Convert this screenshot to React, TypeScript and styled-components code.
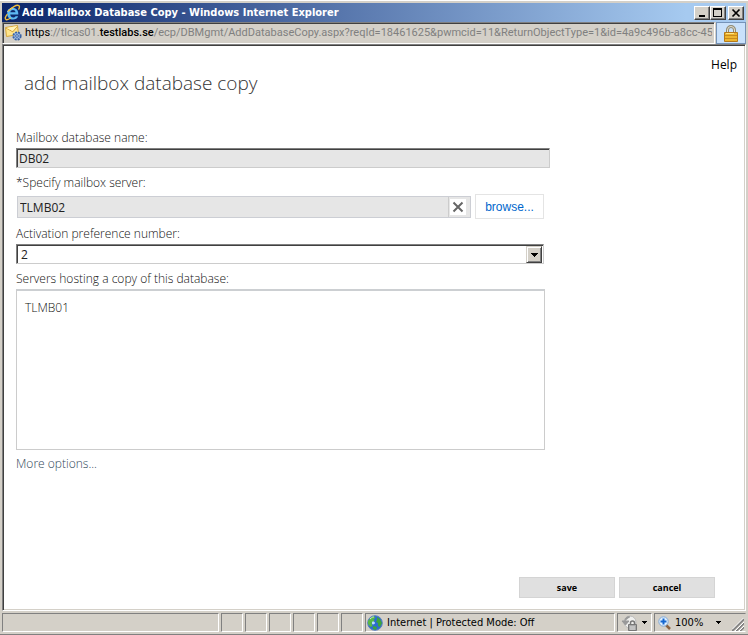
import React from "react";
import styled, { createGlobalStyle } from "styled-components";

const chromeFont = `"DejaVu Sans Condensed", "DejaVu Sans", Tahoma, sans-serif`;
const pageFont = `"Open Sans", "Noto Sans", "Segoe UI", sans-serif`;
const face = "#d4d0c8";

const GlobalStyle = createGlobalStyle`
  *, *::before, *::after { box-sizing: border-box; }
  body { margin: 0; background: ${face}; }
  button, input, select { font: inherit; color: inherit; margin: 0; border-radius: 0; }
  svg { display: block; flex: none; }
`;

const Window = styled.div`
  display: flex;
  flex-direction: column;
  min-height: 100vh;
  padding: 1px 2px 0;
  background: ${face};
  border-bottom: 1px solid #808080;
  box-shadow: inset 0 1px #fff;
  font-family: ${chromeFont};
  font-size: 11px;
`;

const TitleBar = styled.header`
  display: flex;
  align-items: center;
  gap: 1px;
  height: 19px;
  margin-top: 2px;
  padding: 0 2px;
  color: #fff;
  background: linear-gradient(90deg, #0a246a, #a6caf0 92%);
`;

const WindowTitle = styled.div`
  flex: 1;
  min-width: 0;
  overflow: hidden;
  white-space: nowrap;
  font-weight: bold;
`;

const CaptionButtons = styled.div`
  display: flex;
`;

const CaptionButton = styled.button<{ $apart?: boolean }>`
  display: grid;
  place-items: center;
  width: 16px;
  height: 14px;
  padding: 0;
  margin-left: ${(p) => (p.$apart ? 2 : 0)}px;
  color: #000;
  background: ${face};
  border: 1px solid;
  border-color: #fff #404040 #404040 #fff;
  box-shadow: inset -1px -1px #808080;
`;

const AddressBar = styled.div`
  display: flex;
  height: 22px;
`;

const Address = styled.div`
  display: flex;
  flex: 1;
  align-items: center;
  gap: 3px;
  min-width: 0;
  padding: 0 2px;
  border: 1px solid;
  border-color: #808080 #fff #fff #808080;
  box-shadow: inset 1px 1px #404040;
`;

const Url = styled.div`
  flex: 1;
  min-width: 0;
  overflow: hidden;
  white-space: nowrap;
  color: #808080;
  font-family: Roboto, Tahoma, sans-serif;
  font-size: 11px;
  line-height: 16px;
`;

const UrlPart = styled.span<{ $host?: boolean }>`
  color: #000;
  font-weight: ${(p) => (p.$host ? 500 : 400)};
`;

const SecurityButton = styled.button`
  display: grid;
  place-items: center;
  width: 30px;
  padding: 0;
  margin-left: 1px;
  background: #c9e1fb;
  border: 1px solid #7593b8;
`;

const Page = styled.main`
  display: flex;
  flex: 1;
  flex-direction: column;
  padding: 12px 30px 12px 12px;
  color: #333;
  background: #fff;
  border: 1px solid;
  border-color: #808080 #fff #fff #808080;
  box-shadow: inset 1px 1px #404040, inset -1px -1px ${face};
  font-family: ${pageFont};
  font-size: 12px;
  line-height: 20px;
`;

const HelpLink = styled.a`
  align-self: flex-end;
  margin-right: -22px;
  color: #000;
  line-height: 16px;
  text-decoration: none;
`;

const Heading = styled.h1`
  margin: 0 0 35px 9px;
  font-size: 19px;
  font-weight: 300;
  line-height: 20px;
`;

const Form = styled.form`
  display: flex;
  flex: 1;
  flex-direction: column;
  align-items: stretch;
`;

const Fields = styled.div`
  display: flex;
  flex-direction: column;
  max-width: 535px;
  padding: 0 0 0 1px;
`;

const Label = styled.label`
  display: block;
  height: 20px;
  font-weight: 300;
  color: #111;
`;

const NameInput = styled.input`
  width: 100%;
  height: 20px;
  padding: 1px 2px 0;
  margin-bottom: 5px;
  color: #222;
  background: #e6e6e6;
  border: 1px solid;
  border-color: #808080 #ccc #ccc #808080;
  box-shadow: inset 1px 1px #404040;
  outline: none;
`;

const PickerRow = styled.div`
  display: flex;
  align-items: center;
  gap: 4px;
  margin: 1px 6px 5px 1px;
`;

const Picker = styled.div`
  display: flex;
  flex: 1;
  min-width: 0;
  height: 22px;
  background: #e6e6e6;
  border: 1px solid #ccced4;
`;

const PickerInput = styled.input`
  flex: 1;
  min-width: 0;
  padding: 2px 2px 0;
  color: #222;
  background: transparent;
  border: 0;
  outline: none;
`;

const ClearButton = styled.button`
  display: grid;
  place-items: center;
  width: 21px;
  padding: 0;
  background: #fff;
  border: solid #e6e6e6;
  border-width: 2px 4px 2px 1px;
  box-shadow: -1px 0 #ccc;
`;

const BrowseButton = styled.button`
  width: 69px;
  height: 25px;
  padding: 0;
  color: #06c;
  background: #fff;
  border: 1px solid #e4e4e4;
  font-family: "Liberation Sans", Arial, sans-serif;
`;

const SelectBox = styled.div`
  display: grid;
  grid-template-rows: 1fr;
  grid-template-columns: 1fr 16px;
  height: 20px;
  padding: 1px 1px 0;
  margin: 0 6px 5px 0;
  border: 1px solid;
  border-color: #808080 #ccc #ccc #808080;
  box-shadow: inset 1px 1px #404040;
`;

const PreferenceSelect = styled.select`
  grid-area: 1 / 1 / 2 / 3;
  height: 17px;
  padding: 0 3px;
  color: #222;
  line-height: 16px;
  appearance: none;
  background: transparent;
  border: 0;
  outline: none;
`;

const SelectArrow = styled.span`
  display: grid;
  grid-area: 1 / 2;
  place-items: center;
  color: #000;
  background: ${face};
  border: 1px solid;
  border-color: ${face} #404040 #404040 ${face};
  box-shadow: inset 1px 1px #fff, inset -1px -1px #808080;
  pointer-events: none;
`;

const ServerList = styled.ul`
  height: 161px;
  padding: 7px 8px;
  margin: 0 5px 4px 0;
  overflow: auto;
  list-style: none;
  font-weight: 300;
  color: #111;
  border: 1px solid #ccc;
  border-top: 2px solid #cccfd2;
`;

const MoreLink = styled.a`
  align-self: flex-start;
  color: #2f4757;
  font-weight: 300;
  text-decoration: none;
`;

const Actions = styled.div`
  display: flex;
  justify-content: flex-end;
  gap: 4px;
  margin-top: auto;
`;

const ActionButton = styled.button`
  width: 96px;
  height: 21px;
  padding: 0;
  color: #000;
  background: #e0e0e0;
  border: 1px solid #d4d4d4;
  font-size: 9px;
  font-weight: 700;
  line-height: 18px;
`;

const StatusBar = styled.footer`
  display: flex;
  gap: 2px;
  height: 23px;
  padding: 2px 0 2px;
`;

const StatusCell = styled.div<{ $width?: number; $last?: boolean }>`
  display: flex;
  flex: ${(p) => (p.$width ? `0 0 ${p.$width}px` : "1")};
  align-items: center;
  gap: 4px;
  min-width: 0;
  padding: 0 1px;
  white-space: nowrap;
  border: 1px solid;
  border-color: #808080 ${(p) => (p.$last ? face : "#fff")} #fff #808080;
`;

const StatusButton = styled.button`
  display: flex;
  flex: 1;
  align-items: center;
  justify-content: space-between;
  padding: 0 3px 0 2px;
  background: none;
  border: 0;
`;

const ZoomText = styled.span`
  flex: 1;
  padding-left: 4px;
  text-align: left;
`;

const Grip = styled.svg`
  align-self: flex-end;
  margin-left: 4px;
`;

const IeIcon = () => (
  <svg width="17" height="17" viewBox="0 0 17 17" fill="none">
    <path d="M14.3 10.6H6.2c.2 2 1.5 2.9 2.9 2.9 1.2 0 2-.5 2.5-1.3h2.5c-.8 2.2-2.6 3.3-5.1 3.3-3.4 0-5.8-2.3-5.8-5.8 0-3.4 2.4-5.8 5.8-5.8s5.6 2.5 5.3 6.7ZM6.3 8.3h5.2c-.2-1.5-1.2-2.3-2.5-2.3-1.4 0-2.4.8-2.7 2.3Z" fill="#5db9f4" />
    <path d="M3.6 8c.7-2.6 3-4.2 5.5-4.1" stroke="#b9e7ff" />
    <path d="M3.4 10.1C1.2 12.6.7 14.8 2 15.5c1 .5 2.8-.2 4.6-1.5M4.1 7.4C7.5 3.4 12.6.4 14.8 1.6c1 .6.7 2.2-.3 4" stroke="#f0bd3d" strokeWidth="1.4" />
  </svg>
);

const MailGearIcon = () => (
  <svg width="17" height="16" viewBox="0 0 17 16">
    <path d="M.5 2.5 12.5.5l1 9-12 2Z" fill="#ffe58b" stroke="#d8a93c" />
    <path d="m1 3 6.8 3.800L12.700 1" fill="none" stroke="#d4a032" />
    <path d="m1.500 3 6 3 5-5Z" fill="#fff4bd" />
    <circle cx="12" cy="11" r="3.700" fill="#94b7e4" stroke="#3a62a4" strokeWidth="1.800" strokeDasharray="2 1" />
    <circle cx="12" cy="11" r="1.300" fill="#eef5ff" stroke="#3a62a4" />
  </svg>
);

const LockIcon = () => (
  <svg width="14" height="17" viewBox="0 0 14 17">
    <path d="M3.500 8V5a3.500 3.500 0 0 1 7 0v3" fill="none" stroke="#8f8a72" strokeWidth="3" />
    <path d="M3.500 8V5a3.500 3.500 0 0 1 7 0v3" fill="none" stroke="#e4e2d8" />
    <path d="M.5 7.500h13v9H.5z" fill="#edb52d" stroke="#b57a1a" />
    <path d="M1 10.500h12M1 13.500h12" stroke="#c98a1c" />
    <path d="M2 8.500h8" stroke="#ffe384" />
  </svg>
);

const GlobeIcon = () => (
  <svg width="16" height="16" viewBox="0 0 16 16">
    <circle cx="8" cy="8" r="7.300" fill="#2c6cd0" stroke="#5a7fc0" />
    <path d="M3 3.500 7 1l1.500 2-2 1 1 2-3 2 1 3-2 1L1 9V6Z" fill="#58b945" />
    <path d="m10 2 3 2 2 4-2 4-2-1v-3L9 7l1-2Zm-4 9 4 1-1 3-3-1Z" fill="#3da43c" />
    <path d="M3 4c2-2 3-2 4-2" fill="none" stroke="#cdf4b4" />
    <path d="M5 7c1-1 3 0 3 1s-2 2-3 1Z" fill="#b7dcff" />
  </svg>
);

const FilterLockIcon = () => (
  <svg width="17" height="16" viewBox="0 0 17 16">
    <circle cx="9" cy="7" r="6" fill="#f0f0ee" stroke="#bbb" />
    <path d="M1 6h7L4.500 10ZM4 6C4 3 6 1 9 2" fill="#999" stroke="#999" />
    <path d="M9.500 10V8a2 2 0 0 1 4 0v2" fill="none" stroke="#777" strokeWidth="1.500" />
    <path d="M7.500 9.500h8v6h-8z" fill="#a8a8a8" stroke="#777" />
    <path d="M9 12h5M9 14h5" stroke="#ddd" />
  </svg>
);

const ZoomIcon = () => (
  <svg width="13" height="14" viewBox="0 0 13 14">
    <path d="m8 9 4 4" stroke="#8b623f" strokeWidth="2.500" />
    <circle cx="5.500" cy="5.500" r="4.700" fill="#dceeff" stroke="#83a8d4" />
    <path d="M5.500 2.500v6m-3-3h6" stroke="#1466cf" strokeWidth="2" />
  </svg>
);

const DownArrow = ({ small = false }: { small?: boolean }) => (
  <svg width={small ? 5 : 7} height={small ? 3 : 4} viewBox="0 0 7 4" shapeRendering="crispEdges">
    <path d="M0 0h7L3.500 4Z" fill="#000" />
  </svg>
);

export default function App() {
  return (
    <>
      <GlobalStyle />
      <Window>
        <TitleBar>
          <IeIcon />
          <WindowTitle>Add Mailbox Database Copy - Windows Internet Explorer</WindowTitle>
          <CaptionButtons>
            <CaptionButton aria-label="Minimize">
              <svg width="12" height="10" shapeRendering="crispEdges"><path d="M3 7h6v2H3z" /></svg>
            </CaptionButton>
            <CaptionButton aria-label="Maximize">
              <svg width="12" height="10" shapeRendering="crispEdges"><path d="M1 0h9v9H1zM2 2v6h7V2z" fillRule="evenodd" /></svg>
            </CaptionButton>
            <CaptionButton $apart aria-label="Close">
              <svg width="12" height="10"><path d="m2.500 1.500 7 7m0-7-7 7" stroke="#000" strokeWidth="1.700" /></svg>
            </CaptionButton>
          </CaptionButtons>
        </TitleBar>
        <AddressBar>
          <Address>
            <MailGearIcon />
            <Url>
              <UrlPart>https</UrlPart>://tlcas01.<UrlPart $host>testlabs.se</UrlPart>
              /ecp/DBMgmt/AddDatabaseCopy.aspx?reqId=18461625&amp;pwmcid=11&amp;ReturnObjectType=1&amp;id=4a9c496b-a8cc-45a
            </Url>
          </Address>
          <SecurityButton aria-label="Security report"><LockIcon /></SecurityButton>
        </AddressBar>
        <Page>
          <HelpLink href="#help">Help</HelpLink>
          <Heading>add mailbox database copy</Heading>
          <Form onSubmit={(e) => e.preventDefault()}>
            <Fields>
              <Label htmlFor="database">Mailbox database name:</Label>
              <NameInput id="database" readOnly value="DB02" />
              <Label htmlFor="server">*Specify mailbox server:</Label>
              <PickerRow>
                <Picker>
                  <PickerInput id="server" readOnly value="TLMB02" />
                  <ClearButton type="button" aria-label="Clear">
                    <svg width="12" height="12"><path d="m1.500 1.500 9 9m0-9-9 9" stroke="#666" strokeWidth="2" /></svg>
                  </ClearButton>
                </Picker>
                <BrowseButton type="button">browse...</BrowseButton>
              </PickerRow>
              <Label htmlFor="preference">Activation preference number:</Label>
              <SelectBox>
                <PreferenceSelect id="preference" defaultValue="2">
                  <option>1</option>
                  <option>2</option>
                </PreferenceSelect>
                <SelectArrow><DownArrow /></SelectArrow>
              </SelectBox>
              <Label as="div" id="servers-label">Servers hosting a copy of this database:</Label>
              <ServerList aria-labelledby="servers-label">
                <li>TLMB01</li>
              </ServerList>
              <MoreLink href="#more">More options...</MoreLink>
            </Fields>
            <Actions>
              <ActionButton type="submit">save</ActionButton>
              <ActionButton type="button">cancel</ActionButton>
            </Actions>
          </Form>
        </Page>
        <StatusBar>
          <StatusCell />
          {[1, 2, 3, 4, 5, 6].map((n) => <StatusCell key={n} $width={22} />)}
          <StatusCell $width={250}>
            <GlobeIcon />
            Internet | Protected Mode: Off
          </StatusCell>
          <StatusCell $width={35}>
            <StatusButton aria-label="Privacy filtering"><FilterLockIcon /><DownArrow small /></StatusButton>
          </StatusCell>
          <StatusCell $width={92} $last>
            <StatusButton aria-label="Zoom level"><ZoomIcon /><ZoomText>100%</ZoomText><DownArrow small /></StatusButton>
            <Grip width="12" height="13" viewBox="0 0 12 13">
              <path d="M0 13 12 1M4 13l8-8M8 13l4-4" stroke="#808080" strokeWidth="2" />
              <path d="m0 11.500 11.500-11.500M3 13l9-9M7 13l5-5" stroke="#fff" />
            </Grip>
          </StatusCell>
        </StatusBar>
      </Window>
    </>
  );
}
